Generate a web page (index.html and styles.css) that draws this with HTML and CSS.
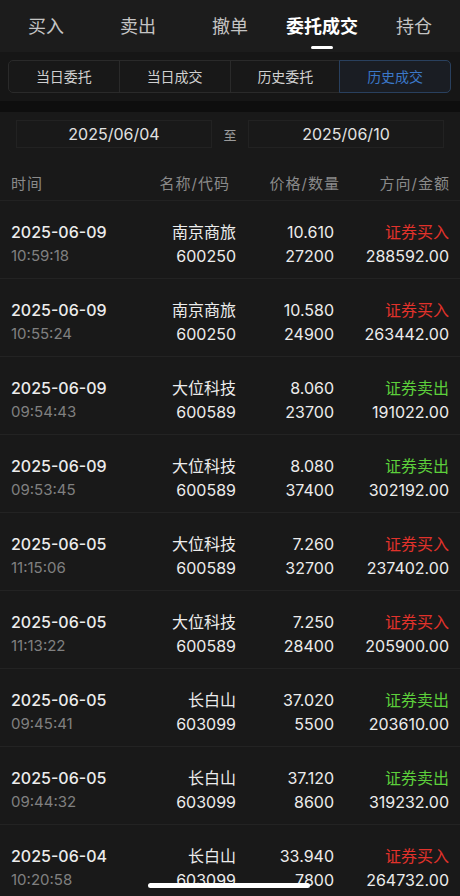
FILE: index.html
```html
<!DOCTYPE html>
<html>
	<head>
		<meta charset="UTF-8">
		<title>委托成交</title>
		<link rel="stylesheet" href="styles.css">
	</head>
	<body>
		<div id="page">
			<ul class="tabs">
				<li>买入</li>
				<li>卖出</li>
				<li>撤单</li>
				<li class="active">委托成交</li>
				<li>持仓</li>
			</ul>
			<div class="segBar">
				<ul class="seg">
					<li>当日委托</li>
					<li>当日成交</li>
					<li>历史委托</li>
					<li class="on">历史成交</li>
				</ul>
			</div>
			<div class="gap"></div>
			<div class="dates">
				<div class="dateBox">2025/06/04</div>
				<span class="to">至</span>
				<div class="dateBox">2025/06/10</div>
			</div>
			<div class="head">
				<span class="c1">时间</span>
				<span class="c2">名称/代码</span>
				<span class="c3">价格/数量</span>
				<span class="c4">方向/金额</span>
			</div>
			<div id="list"></div>
		</div>
		<div class="homeBar"></div>

		<script type="text/javascript">
			// 成交记录
			var data = [
				["2025-06-09","10:59:18","南京商旅","600250","10.610","27200","证券买入","288592.00"],
				["2025-06-09","10:55:24","南京商旅","600250","10.580","24900","证券买入","263442.00"],
				["2025-06-09","09:54:43","大位科技","600589","8.060","23700","证券卖出","191022.00"],
				["2025-06-09","09:53:45","大位科技","600589","8.080","37400","证券卖出","302192.00"],
				["2025-06-05","11:15:06","大位科技","600589","7.260","32700","证券买入","237402.00"],
				["2025-06-05","11:13:22","大位科技","600589","7.250","28400","证券买入","205900.00"],
				["2025-06-05","09:45:41","长白山","603099","37.020","5500","证券卖出","203610.00"],
				["2025-06-05","09:44:32","长白山","603099","37.120","8600","证券卖出","319232.00"],
				["2025-06-04","10:20:58","长白山","603099","33.940","7800","证券买入","264732.00"]
			];
			var list = document.getElementById('list');
			var html = '';
			for(var i=0;i<data.length;i++){
				var d = data[i];
				var cls = d[6] == '证券买入' ? 'buy' : 'sell';
				html += '<div class="row">'
					+ '<div class="c1"><div class="top date">'+d[0]+'</div><div class="bot time">'+d[1]+'</div></div>'
					+ '<div class="c2"><div class="top">'+d[2]+'</div><div class="bot">'+d[3]+'</div></div>'
					+ '<div class="c3"><div class="top">'+d[4]+'</div><div class="bot">'+d[5]+'</div></div>'
					+ '<div class="c4"><div class="top '+cls+'">'+d[6]+'</div><div class="bot">'+d[7]+'</div></div>'
					+ '</div>';
			}
			list.innerHTML = html;
		</script>
	</body>
</html>
```

FILE: styles.css
```css
body{
	margin: 0;
	background: #191919;
	font-family: Inter, "Noto Sans CJK SC", sans-serif;
	color: #e8e8e8;
}
#page{
	width: 460px;
	height: 896px;
	overflow: hidden;
}
ul{
	list-style: none;
	margin: 0;
	padding: 0;
}

/* 顶部标签 */
.tabs{
	display: flex;
	height: 52px;
	background: #1c1c1c;
}
.tabs li{
	flex: 1;
	text-align: center;
	font-size: 18px;
	line-height: 54px;
	color: #c4c4c4;
	position: relative;
}
.tabs li.active{
	color: #fff;
	font-weight: bold;
}
.tabs li.active:after{
	content: "";
	position: absolute;
	left: 35px;
	top: 46px;
	width: 22px;
	height: 3px;
	border-radius: 2px;
	background: #fff;
}

/* 分段 */
.segBar{
	background: #161616;
	padding: 8px 9px 8px 8px;
}
.seg{
	display: flex;
	height: 31px;
	border: 1px solid #2a2a2a;
	border-radius: 5px;
	background: #181818;
}
.seg li{
	flex: 1;
	text-align: center;
	line-height: 31px;
	font-size: 14px;
	color: #d0d0d0;
	border-left: 1px solid #2a2a2a;
}
.seg li:first-child{
	border-left: none;
}
.seg li.on{
	color: #3b78c8;
	background: #1a1d23;
	border: 1px solid #29405e;
	margin: -1px;
	border-radius: 0 5px 5px 0;
}

.gap{
	height: 11px;
	background: #0e0e0e;
}

/* 日期 */
.dates{
	display: flex;
	align-items: center;
	padding: 8px 16px 0 16px;
}
.dateBox{
	width: 194px;
	height: 26px;
	line-height: 26px;
	border: 1px solid #222;
	text-align: center;
	font-size: 16px;
	color: #e2e2e2;
}
.to{
	flex: 1;
	text-align: center;
	font-size: 13px;
	color: #9a9a9a;
}

/* 表头 */
.head{
	display: flex;
	box-sizing: border-box;
	height: 53px;
	line-height: 72px;
	padding: 0 10px 0 11px;
	font-size: 15px;
	letter-spacing: 1px;
	color: #8a8a8a;
	border-bottom: 1px solid #222;
}

.c1{ width: 120px; text-align: left; }
.c2{ width: 105px; text-align: right; }
.c3{ width: 98px; text-align: right; }
.c4{ flex: 1; text-align: right; }
.head .c2{ width: 99px; }
.head .c3{ width: 110px; }

/* 列表 */
.row{
	display: flex;
	height: 78px;
	box-sizing: border-box;
	padding: 19px 11px 0 11px;
	border-bottom: 1px solid #232323;
}
.top,
.bot{
	font-size: 16px;
	line-height: 24px;
	color: #ececec;
}
.date{
	font-weight: 500;
}
.time{
	font-size: 15px;
	color: #808080;
}
.buy{
	color: #e1322b;
}
.sell{
	color: #5ccf3b;
}

.homeBar{
	position: absolute;
	left: 148px;
	top: 883px;
	width: 162px;
	height: 5px;
	border-radius: 3px;
	background: #fff;
}
```
